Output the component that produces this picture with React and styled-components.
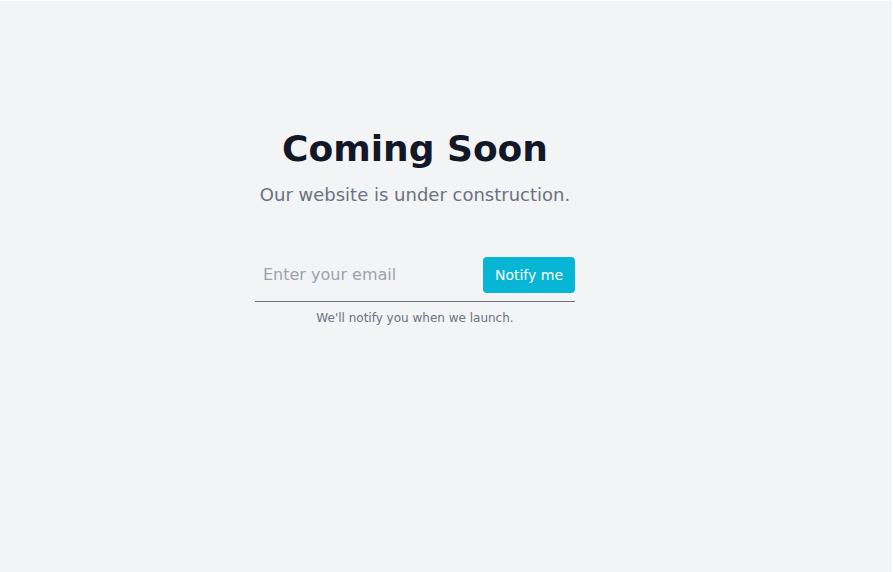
import styled, { createGlobalStyle } from 'styled-components';

const GlobalStyle = createGlobalStyle`
  * {
    box-sizing: border-box;
  }

  html,
  body {
    margin: 0;
    padding: 0;
    background: #ffffff;
  }

  body {
    font-family: 'DejaVu Sans', sans-serif;
  }
`;

const App = () => {
  return (
    <>
      <GlobalStyle />
      <Page>
        <Content>
          <h1 className="title">Coming Soon</h1>
          <p className="subtitle">Our website is under construction.</p>

          <Form onSubmit={(e) => e.preventDefault()}>
            <input type="email" placeholder="Enter your email" />
            <button type="submit">Notify me</button>
          </Form>

          <p className="note">We'll notify you when we launch.</p>
        </Content>
      </Page>
    </>
  );
};

const Page = styled.main`
  min-height: 571px;
  width: 892px;
  margin-top: 1px;
  background: #f3f4f6;
  display: flex;
  justify-content: flex-start;
  padding-top: 128px;
`;

const Content = styled.div`
  width: 830px;
  display: flex;
  flex-direction: column;
  align-items: center;

  .title {
    margin: 0 0 12px;
    font-size: 36px;
    line-height: 40px;
    font-weight: 700;
    color: #111827;
  }

  .subtitle {
    margin: 0 0 40px;
    font-size: 18px;
    line-height: 28px;
    color: #6b7280;
  }

  .note {
    margin: 8px 0 0;
    font-size: 12px;
    line-height: 16px;
    color: #6b7280;
  }
`;

const Form = styled.form`
  width: 320px;
  display: flex;
  align-items: center;
  padding: 8px 0;
  border-bottom: 1px solid #71717a;

  input {
    flex: 1;
    min-width: 0;
    border: none;
    background: transparent;
    outline: none;
    padding: 4px 8px;
    font-family: inherit;
    font-size: 16px;
    line-height: 24px;
    color: #374151;

    &::placeholder {
      color: #9ca3af;
    }
  }

  button {
    flex-shrink: 0;
    border: none;
    border-radius: 4px;
    background: #06b6d4;
    color: #ffffff;
    font-family: inherit;
    font-size: 14px;
    line-height: 20px;
    padding: 8px 12px;
    cursor: pointer;
  }
`;

export default App;
